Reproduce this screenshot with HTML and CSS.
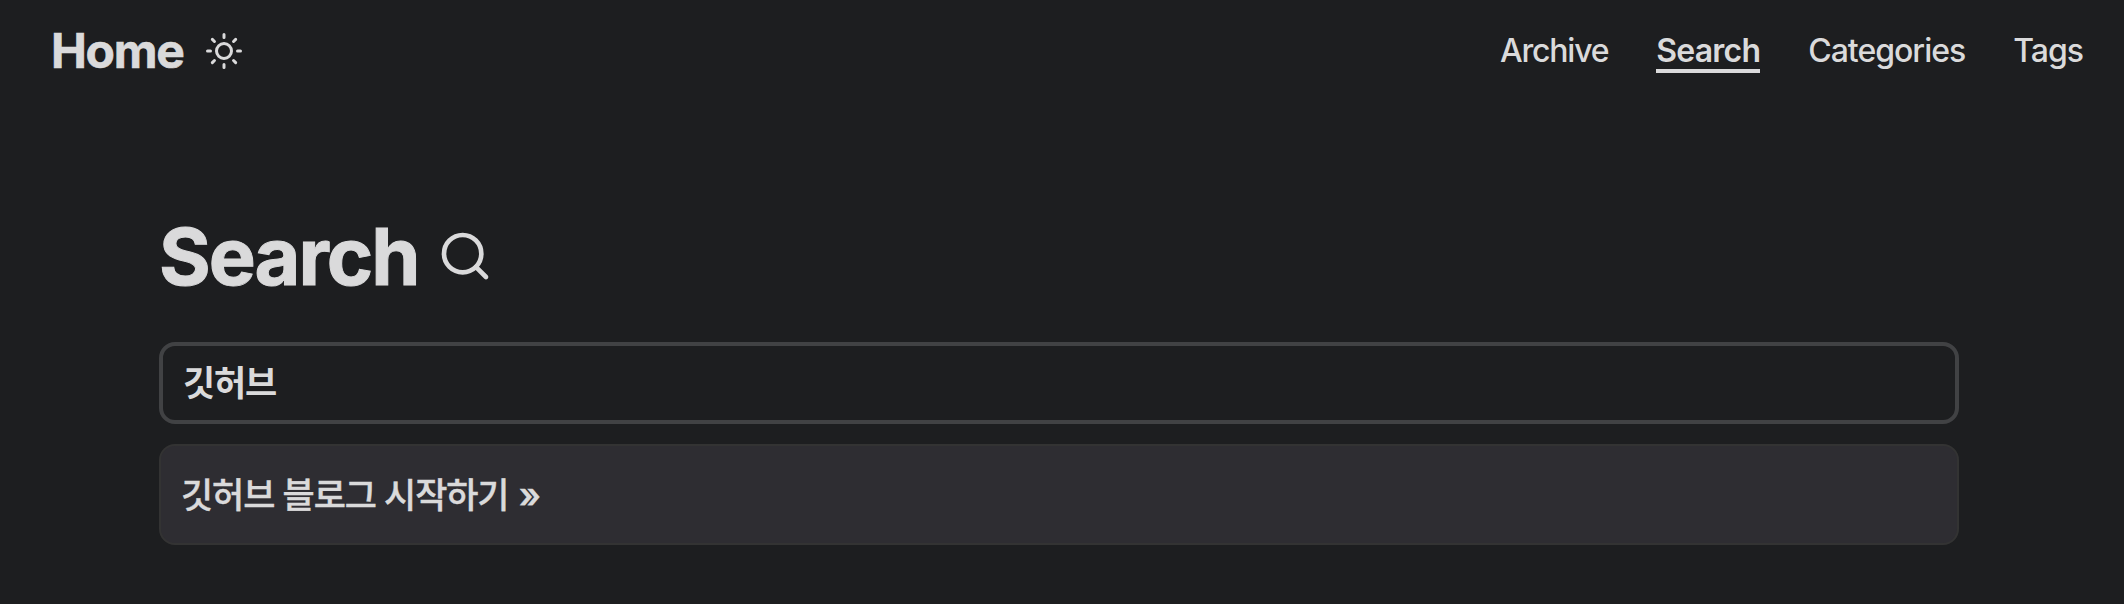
FILE: index.html
```html
<!DOCTYPE html>
<html lang="ko">
<head>
<meta charset="utf-8">
<title>Search</title>
<link rel="stylesheet" href="styles.css">
</head>
<body>
<header class="nav">
  <div class="logo">
    <a class="home">Home</a>
    <svg class="sun" viewBox="0 0 24 24"><circle cx="12" cy="12" r="5"/><path d="M12 1v2M12 21v2M4.22 4.22l1.42 1.42M18.36 18.36l1.42 1.42M1 12h2M21 12h2M4.22 19.78l1.42-1.42M18.36 5.64l1.42-1.42"/></svg>
  </div>
  <nav class="menu">
    <a class="archive">Archive</a>
    <a class="active">Search</a>
    <a class="categories">Categories</a>
    <a class="tags">Tags</a>
  </nav>
</header>
<main class="main">
  <h1 class="title"><span class="title-text">Search</span><svg class="glass" viewBox="0 0 24 24"><circle cx="11" cy="11" r="8"/><path d="M21 21l-4.35-4.35"/></svg></h1>
  <div class="search-box"><span class="query">깃허브</span></div>
  <div class="result"><span class="result-text">깃허브 블로그 시작하기 <span class="arrow">»</span></span></div>
</main>
</body>
</html>
```
FILE: styles.css
```css
* { box-sizing: border-box; }
body { margin: 0; background: #1d1e20; color: #dadadb; font-family: Inter, "Noto Sans CJK KR", sans-serif; }
svg { flex: none; fill: none; stroke: currentColor; stroke-width: 2; stroke-linecap: round; stroke-linejoin: round; }
.nav { height: 120px; padding: 0 41px 0 51px; display: flex; justify-content: space-between; }
.logo { display: flex; align-items: center; height: 102px; }
.home { width: 155px; font-size: 48px; line-height: 58px; font-weight: 750; letter-spacing: -1.3px; -webkit-text-stroke: .6px currentColor; }
.sun { width: 36px; height: 36px; }
.menu { display: flex; align-items: center; height: 102px; gap: 48px; font-size: 32px; font-weight: 450; }
.menu a { height: 44px; letter-spacing: -1px; line-height: 36px; border-bottom: 4px solid transparent; padding-top: 4px; }
.menu .archive { letter-spacing: -1.2px; }
.menu .active { font-weight: 600; letter-spacing: -.8px; border-color: currentColor; }
.main { padding: 80px 165px 0 159px; }
.title { margin: 0; height: 112px; display: flex; align-items: center; font-size: 79px; letter-spacing: -2px; font-weight: 750; -webkit-text-stroke: 1px currentColor; }
.title-text { width: 278px; line-height: 96px; padding-bottom: 1px; }
.glass { width: 56px; height: 56px; }
.search-box { margin-top: 30px; height: 82px; border: 4px solid #414244; border-radius: 16px; display: flex; align-items: center; padding: 0 0 5px 20px; font-size: 35px; font-weight: 700; letter-spacing: -1.2px; }
.result { margin-top: 20px; height: 101px; border: 2px solid #333; border-radius: 16px; background: #2e2d32; display: flex; align-items: center; padding: 0 0 4px 20px; font-size: 35px; font-weight: 500; letter-spacing: -1.1px; -webkit-text-stroke: .4px currentColor; }
.arrow { margin-left: 2px; font-weight: 600; }
```
